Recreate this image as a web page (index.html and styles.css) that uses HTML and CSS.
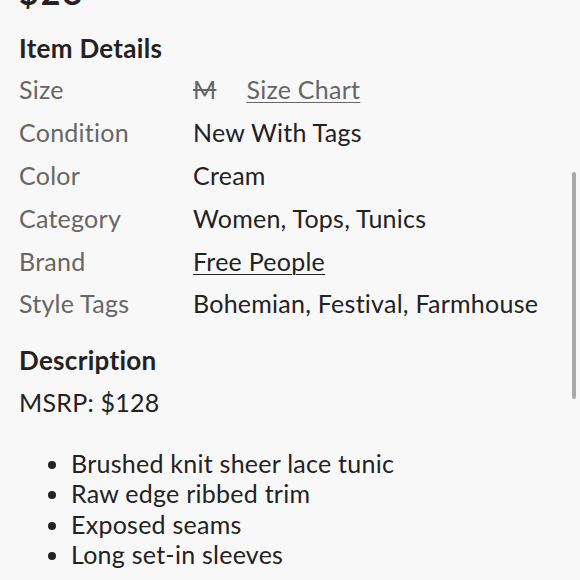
FILE: index.html
```html
<!DOCTYPE html>
<html>
<head>
<meta charset="utf-8">
<link rel="stylesheet" href="styles.css">
</head>
<body>
<div class="page">
  <div class="price">$28</div>
  <h2 class="heading">Item Details</h2>
  <div class="details">
    <div class="label">Size</div>
    <div class="value"><span class="strike">M</span><a class="link size-chart">Size Chart</a></div>
    <div class="label">Condition</div>
    <div class="value">New With Tags</div>
    <div class="label">Color</div>
    <div class="value">Cream</div>
    <div class="label">Category</div>
    <div class="value">Women, Tops, Tunics</div>
    <div class="label">Brand</div>
    <div class="value"><a class="link">Free People</a></div>
    <div class="label">Style Tags</div>
    <div class="value">Bohemian, Festival, Farmhouse</div>
  </div>
  <h2 class="heading desc-heading">Description</h2>
  <p class="msrp">MSRP: $128</p>
  <ul class="bullets">
    <li>Brushed knit sheer lace tunic</li>
    <li>Raw edge ribbed trim</li>
    <li>Exposed seams</li>
    <li>Long set-in sleeves</li>
  </ul>
</div>
<div class="scrollbar"></div>
</body>
</html>
```
FILE: styles.css
```css
html, body {
  margin: 0;
  padding: 0;
  background: #f9f8f8;
  overflow: hidden;
  height: 580px;
}
body {
  font-family: "Lato", "Open Sans", sans-serif;
  color: #222;
}
.page {
  padding: 0 19px;
}
.price {
  font-size: 34px;
  font-weight: 700;
  line-height: 34px;
  margin-top: -25px;
  height: 58px;
  color: #222;
  letter-spacing: 2px;
}
.heading {
  margin: 0;
  font-size: 26px;
  font-weight: 700;
  line-height: 30px;
  letter-spacing: 0.3px;
  color: #222;
}
.details {
  display: grid;
  grid-template-columns: 174px 1fr;
  grid-auto-rows: 42.8px;
  align-items: center;
  font-size: 25px;
  letter-spacing: 0.25px;
  margin-top: 5px;
}
.label {
  color: #666;
}
.value {
  color: #222;
  white-space: nowrap;
}
.strike {
  text-decoration: line-through;
  color: #666;
  margin-right: 30px;
}
.link {
  text-decoration: underline;
  text-underline-offset: 3px;
  text-decoration-thickness: 1px;
}
.size-chart {
  color: #666;
}
.desc-heading {
  margin-top: 20px;
}
.msrp {
  margin: 12px 0 0;
  font-size: 25px;
  letter-spacing: 0.25px;
  line-height: 30px;
}
.bullets {
  margin: 31px 0 0;
  padding-left: 52px;
  font-size: 25px;
  letter-spacing: 0.25px;
  line-height: 30.5px;
}
.scrollbar {
  position: absolute;
  left: 572px;
  top: 172px;
  width: 4px;
  height: 227px;
  border-radius: 2px;
  background: #a9a9a9;
}
```
